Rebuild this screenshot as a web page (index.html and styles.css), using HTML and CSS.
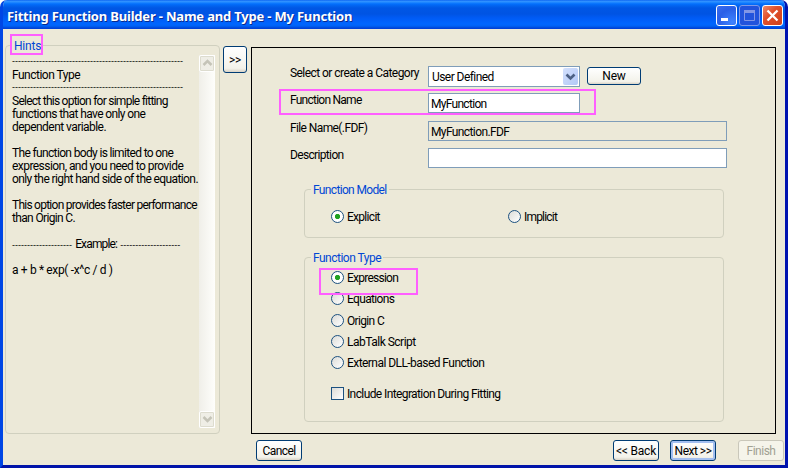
FILE: index.html
```html
<!DOCTYPE html>
<html lang="en">
<head>
<meta charset="utf-8">
<title>Fitting Function Builder</title>
<link rel="stylesheet" href="styles.css">
</head>
<body>
<div class="window">
  <header class="titlebar">
    <h1>Fitting Function Builder - Name and Type - My Function</h1>
    <div class="controls">
      <span class="ctl"><svg width="21" height="21"><path d="M5 13h7v3H5z" fill="#fff"/></svg></span>
      <span class="ctl dim"><svg width="21" height="21"><path d="M5.5 6v9.5h10V6" fill="none" stroke="#8296e6"/><path d="M5 5h11v3H5z" fill="#8296e6"/></svg></span>
      <span class="ctl close"><svg width="21" height="21"><path d="M5.5 5.5l10 10M15.5 5.5l-10 10" stroke="#fff" stroke-width="2.3"/></svg></span>
    </div>
  </header>
  <main class="client">
    <section class="group hints">
      <h2 class="legend">Hints</h2>
      <div class="hint-text">
        <p class="dash">---------------------------------------------------------</p>
        <p class="t50">Function Type</p>
        <p class="dash">---------------------------------------------------------</p>
        <p class="t75">Select this option for simple fitting</p>
        <p class="t60">functions that have only one</p>
        <p class="t55">dependent variable.</p>
        <p></p>
        <p class="t65">The function body is limited to one</p>
        <p class="t55">expression, and you need to provide</p>
        <p class="t60">only the right hand side of the equation.</p>
        <p></p>
        <p class="t75">This option provides faster performance</p>
        <p class="t65">than Origin C.</p>
        <p></p>
        <p class="example"><span class="dash">--------------------</span> Example: <span class="dash">--------------------</span></p>
        <p></p>
        <p class="t35">a + b * exp( -x^c / d )</p>
      </div>
      <div class="scroll">
        <span class="arrow"><svg width="15" height="16"><path d="M3.5 10l4-4 4 4" fill="none" stroke="#c5c4b8" stroke-width="2.5"/></svg></span>
        <span class="arrow"><svg width="15" height="16"><path d="M3.5 6l4 4 4-4" fill="none" stroke="#c5c4b8" stroke-width="2.5"/></svg></span>
      </div>
    </section>
    <span class="btn toggle">&gt;&gt;</span>
    <section class="panel">
      <div class="form">
        <span class="label t55">Select or create a Category</span>
        <div class="line"><div class="field select t55">User Defined<span class="drop"><svg width="15" height="17"><path d="M3.5 6.5l4 4 4-4" fill="none" stroke="#4d6185" stroke-width="2.6"/></svg></span></div><span class="btn new">New</span></div>
        <span class="label t75">Function Name</span>
        <div class="field name t70">MyFunction</div>
        <span class="label t60">File Name(.FDF)</span>
        <div class="field readonly t60">MyFunction.FDF</div>
        <span class="label t65">Description</span>
        <div class="field"></div>
      </div>
      <div class="group model">
        <h2 class="legend t65">Function Model</h2>
        <span class="option explicit t70"><i class="radio on"></i>Explicit</span>
        <span class="option t80"><i class="radio"></i>Implicit</span>
      </div>
      <div class="group type">
        <h2 class="legend t50">Function Type</h2>
        <span class="option t75"><i class="radio on"></i>Expression</span>
        <span class="option t65"><i class="radio"></i>Equations</span>
        <span class="option t65"><i class="radio"></i>Origin C</span>
        <span class="option t50"><i class="radio"></i>LabTalk Script</span>
        <span class="option dll t55"><i class="radio"></i>External DLL-based Function</span>
        <span class="option integ t60"><i class="check"></i>Include Integration During Fitting</span>
      </div>
    </section>
  </main>
  <footer class="actions">
    <span class="btn cancel t60">Cancel</span>
    <span class="btn back">&lt;&lt; Back</span>
    <span class="btn next t50">Next &gt;&gt;</span>
    <span class="btn disabled t50">Finish</span>
  </footer>
  <div class="mark mark-hints"></div>
  <div class="mark mark-name"></div>
  <div class="mark mark-expr"></div>
</div>
</body>
</html>
```
FILE: styles.css
```css
* { box-sizing: border-box; margin: 0; padding: 0; }
body { background: #fff; font: 12px/13px Roboto, "Liberation Sans", sans-serif; letter-spacing: -0.2px; color: #000; }
svg { display: block; }
/* text tracking steps */
.t35 { letter-spacing: -0.35px; }
.t50 { letter-spacing: -0.5px; }
.t55 { letter-spacing: -0.55px; }
.t60 { letter-spacing: -0.6px; }
.t65 { letter-spacing: -0.65px; }
.t70 { letter-spacing: -0.7px; }
.t75 { letter-spacing: -0.75px; }
.t80 { letter-spacing: -0.8px; }
.window {
  position: relative; width: 788px; height: 468px; overflow: hidden;
  border: solid; border-width: 0 3px 3px; border-color: #0019cf #0013b0 #0013a8 #0046e5;
  border-radius: 7px 7px 0 0; background: #ece9d8;
}
.titlebar {
  height: 29px; margin: 0 -3px; padding: 5px 5px 0 7px; display: flex; justify-content: space-between;
  background: linear-gradient(#0058ee 0, #3593ff 1px, #288eff 2px, #127dff 3px, #036ffc 4px, #0262ee 6px, #0057e5 8px, #0054e3 14px, #005bf5 18px, #0066ff 24px, #0062f5 26px, #0046d8 28px, #003dd7 29px);
}
h1 { font: bold 13px/23px "Noto Sans", sans-serif; letter-spacing: -0.19px; color: #fff; text-shadow: 1px 1px #0a2a8c; white-space: nowrap; }
.controls { display: flex; gap: 2px; }
.ctl { width: 21px; height: 21px; border: 1px solid #fff; border-radius: 3px; background: radial-gradient(circle at 80% 85%, #3f83ff, #2a5fe6 60%, #3a6ef0); }
.ctl svg { margin: -1px; }
.dim { border-color: #7f98e8; background: #2253dc; }
.close { background: linear-gradient(135deg, #ee8a6b, #e0502c 40%, #d0401a); }
.client { height: 404px; padding: 16px 9px 0 2px; display: flex; align-items: flex-start; }
.group { position: relative; border: 1px solid #d0d0bf; border-radius: 4px; }
.legend { position: absolute; top: -6px; left: 6px; padding: 0 2px; font: inherit; color: #0046d5; background: #ece9d8; white-space: nowrap; }
.hints { width: 215px; height: 389px; padding: 9px 4px 0 6px; display: flex; }
.hint-text { width: 187px; padding-top: 1px; white-space: nowrap; }
.hint-text p { height: 13px; }
.dash { font: 9px/11px "Liberation Sans", sans-serif; letter-spacing: 0.003px; }
.example { letter-spacing: -0.85px; word-spacing: 1px; }
.scroll { width: 16px; height: 373px; display: flex; flex-direction: column; justify-content: space-between; background: linear-gradient(90deg, #f0efe9, #fefefb); }
.arrow { width: 16px; height: 17px; border: 1px solid #fff; border-radius: 2px; background: #efeee6; box-shadow: inset 0 0 0 1px #dddccf; }
.arrow svg { margin: -1px 0; }
.btn { display: flex; align-items: center; justify-content: center; padding-top: 2px; border: 1px solid #003c74; border-radius: 3px; background: linear-gradient(#fff, #f3f2ea 85%, #d9d3c6); white-space: nowrap; }
.toggle { width: 24px; height: 27px; margin: 1px 0 0 3px; }
.panel { width: 526px; height: 387px; margin: 2px 0 0 4px; padding: 18px 0 0 38px; border: 1px solid #000; }
.form { display: grid; grid-template-columns: 138px 299px; grid-template-rows: 27px 28px 27px 20px; }
.label { margin-top: 1px; white-space: nowrap; }
.line { display: flex; }
.field { height: 20px; padding: 4px 2px 0; border: 1px solid #7f9db9; background: #fff; }
.select { width: 152px; height: 21px; display: flex; justify-content: space-between; padding: 4px 1px 0 3px; }
.drop { width: 15px; height: 17px; margin-top: -3px; border-radius: 2px; background: linear-gradient(135deg, #d3e0fd, #b3c8f6); }
.new { width: 54px; height: 18px; margin: 1px 0 0 7px; padding-top: 1px; }
.name { width: 152px; }
.readonly { background: #ece9d8; }
.model { width: 420px; height: 49px; margin: 21px 0 0 14px; padding: 20px 0 0 26px; display: flex; align-items: flex-start; }
.type { width: 420px; height: 165px; margin: 19px 0 0 14px; padding: 13px 0 0 26px; }
.option { height: 13px; line-height: 15px; display: flex; gap: 3px; white-space: nowrap; }
.explicit { width: 177px; }
.type .option { margin-bottom: 8.3px; }
.type .dll { margin-bottom: 18px; }
.radio, .check { width: 13px; height: 13px; flex: none; border: 1px solid #1c5180; background: linear-gradient(135deg, #dcdcd7, #fff); }
.radio { border-radius: 50%; }
.on { background: radial-gradient(circle, #21a121 0 2.2px, #fff 3px); }
.actions { height: 32px; padding: 7px 1px 0 253px; display: flex; }
.actions .btn { width: 46px; height: 21px; }
.actions .cancel { margin-right: 311px; }
.actions .next { margin: 0 22px 0 11px; box-shadow: inset 0 0 0 2px #a3bff0; }
.actions .disabled { color: #a1a192; border-color: #c9c7ba; background: #f5f4ea; }
.mark { position: absolute; border: 2px solid #ff5fff; }
.mark-hints { left: 7px; top: 34px; width: 33px; height: 21px; }
.mark-name { left: 276px; top: 89px; width: 317px; height: 26px; }
.mark-expr { left: 316px; top: 268px; width: 99px; height: 27px; }
```
